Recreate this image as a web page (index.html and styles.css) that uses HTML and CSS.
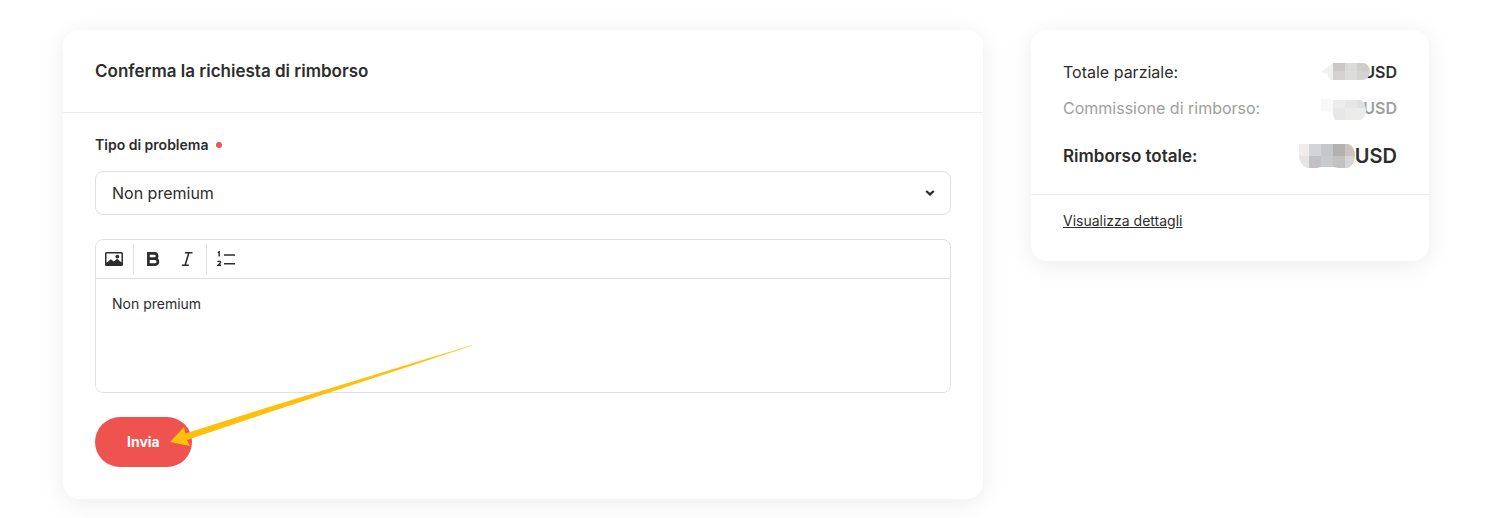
FILE: index.html
```html
<!DOCTYPE html>
<html lang="it">
<head>
    <meta charset="UTF-8">
    <meta name="viewport" content="width=device-width, initial-scale=1">
    <title>Conferma la richiesta di rimborso</title>
    <link rel="stylesheet" href="styles.css">
</head>
<body>
    <main class="page">
        <form class="card">
            <h1 class="card-title">Conferma la richiesta di rimborso</h1>
            <div class="card-body">
                <label class="label" for="problem">Tipo di problema <span class="required"></span></label>
                <div class="select-box">
                    <select id="problem">
                        <option>Non premium</option>
                    </select>
                    <svg class="chevron" width="10" height="8" viewBox="0 0 10 8"><path d="M1.200 2L5 5.400 8.800 2" fill="none" stroke="#2d2d2d" stroke-width="2.200"/></svg>
                </div>

                <div class="editor">
                    <div class="toolbar">
                        <button type="button" class="tool" aria-label="Immagine">
                            <svg width="18" height="14" viewBox="0 0 18 14"><path fill="#2d2d2d" fill-rule="evenodd" d="M1.500 0h15A1.500 1.500 0 0 1 18 1.500v11a1.500 1.500 0 0 1-1.500 1.500h-15A1.500 1.500 0 0 1 0 12.500v-11A1.500 1.500 0 0 1 1.500 0zM1.500 1.500v9.300l4.300-3.600 3 2.400 3.400-2.900 4.300 3.800v-9z"/><circle cx="12.300" cy="4.600" r="1.900" fill="#2d2d2d"/></svg>
                        </button>
                        <span class="divider"></span>
                        <button type="button" class="tool" aria-label="Grassetto">
                            <svg width="14" height="14" viewBox="0 0 14 14"><path d="M2.400 1.300h6a2.700 2.700 0 0 1 0 5.400h-6zm0 5.400h6.500a3 3 0 0 1 0 6H2.400z" fill="none" stroke="#2d2d2d" stroke-width="2.700"/></svg>
                        </button>
                        <button type="button" class="tool" aria-label="Corsivo">
                            <svg width="12" height="14" viewBox="0 0 12 14"><path d="M4 .8h7.500M.8 13.200h7M7.800 1L4.200 13" fill="none" stroke="#2d2d2d" stroke-width="1.600"/></svg>
                        </button>
                        <span class="divider"></span>
                        <button type="button" class="tool" aria-label="Elenco numerato">
                            <svg width="18" height="16" viewBox="0 0 18 16"><path d="M.8 1.600l1.400-.8v4.700M.7 11.200c.2-1.500 2.900-1.500 2.900.1 0 1-1.700 1.900-2.700 3h3.200" fill="none" stroke="#2d2d2d" stroke-width="1.400"/><path d="M7 4h11M7 12.800h11" stroke="#2d2d2d" stroke-width="1.600"/></svg>
                        </button>
                    </div>
                    <textarea class="message" aria-label="Messaggio">Non premium</textarea>
                </div>

                <div class="actions">
                    <button type="submit" class="submit">Invia</button>
                    <svg class="arrow" width="303" height="104" viewBox="0 0 303 104">
                        <defs>
                            <linearGradient id="fade">
                                <stop offset=".85" stop-color="#ffbf0b"/>
                                <stop offset="1" stop-color="#ffbf0b" stop-opacity=".7"/>
                            </linearGradient>
                        </defs>
                        <path fill="url(#fade)" d="M0 97l14-15 1.500 6.500L94 63.500 302 0v.8L94 69 17 95l3 6z"/>
                    </svg>
                </div>
            </div>
        </form>

        <aside class="card">
            <dl class="totals">
                <div class="row">
                    <dt>Totale parziale:</dt>
                    <dd>USD
                        <svg class="mask" width="76" height="18" viewBox="0 0 76 18">
                            <clipPath id="m1"><path d="M0 10L12 1h30c4 0 7 4 7 9s-4 8-8 8H9l-3-6z"/></clipPath>
                            <g clip-path="url(#m1)">
                                <path fill="#f0f0ef" d="M0 0h12v18H0z"/>
                                <path fill="#c9c8c7" d="M12 0h12v9H12z"/><path fill="#dadada" d="M24 0h12v9H24z"/><path fill="#cdcdca" d="M36 0h13v9H36z"/>
                                <path fill="#d3d2d1" d="M12 9h12v9H12z"/><path fill="#dcdcdc" d="M24 9h12v9H24z"/><path fill="#d4d3d1" d="M36 9h13v9H36z"/>
                            </g>
                        </svg>
                    </dd>
                </div>
                <div class="row fee">
                    <dt>Commissione di rimborso:</dt>
                    <dd>USD
                        <svg class="mask" width="76" height="22" viewBox="0 0 76 22">
                            <clipPath id="m2"><path d="M0 0l12 2h26c4 0 7 5 7 10s-3 10-6 10H14l-3-8-11-1z"/></clipPath>
                            <g clip-path="url(#m2)">
                                <path fill="#f8f8f8" d="M0 0h12v22H0z"/>
                                <path fill="#ececec" d="M12 0h12v10H12z"/><path fill="#e7e6e6" d="M24 0h12v10H24z"/><path fill="#dfdfdf" d="M36 0h12v10H36z"/>
                                <path fill="#e7e7e7" d="M12 10h12v12H12z"/><path fill="#ebebea" d="M24 10h24v12H24z"/>
                            </g>
                        </svg>
                    </dd>
                </div>
                <div class="row total">
                    <dt>Rimborso totale:</dt>
                    <dd>USD
                        <svg class="mask" width="98" height="24" viewBox="0 0 98 24">
                            <clipPath id="m3"><path d="M0 0h48c5 0 8 6 8 12s-4 12-8 12h-9l-4-1H22l-4 1h-8C4 24 0 17 0 12z"/></clipPath>
                            <g clip-path="url(#m3)">
                                <path fill="#f0eceb" d="M0 0h10v12H0z"/><path fill="#d3d4d7" d="M10 0h12v12H10z"/><path fill="#c5c7c9" d="M22 0h12v12H22z"/><path fill="#b3b2b1" d="M34 0h12v12H34z"/><path fill="#c8c3be" d="M46 0h10v12H46z"/>
                                <path fill="#e6e5e5" d="M0 12h10v12H0z"/><path fill="#c3c1c3" d="M10 12h12v12H10z"/><path fill="#c9cacc" d="M22 12h12v12H22z"/><path fill="#c2c2c2" d="M34 12h12v12H34z"/><path fill="#d5d5d3" d="M46 12h10v12H46z"/>
                            </g>
                        </svg>
                    </dd>
                </div>
            </dl>
            <div class="details">
                <a href="#">Visualizza dettagli</a>
            </div>
        </aside>
    </main>
</body>
</html>
```
FILE: styles.css
```css
*{
    box-sizing: border-box;
}
body{
    margin: 0;
    background: #fff;
    color: #2d2d2d;
    font-family: Inter, "Liberation Sans", sans-serif;
    font-size: 16px;
    line-height: 24px;
}
button,select,textarea{
    font: inherit;
    color: inherit;
}
.page{
    display: grid;
    grid-template-columns: minmax(0, 1fr) 398px;
    align-items: start;
    gap: 48px;
    padding: 30px 75px 19px 63px;
}
.card{
    background: #fff;
    border-radius: 16px;
    box-shadow: 0 4px 24px rgba(0,0,0,0.08);
}
.card-title{
    margin: 0;
    padding: 29px 32px;
    border-bottom: 1px solid #ececec;
    font-size: 17px;
    font-weight: 600;
}
.card-body{
    padding: 20px 32px 32px;
}
.label{
    display: flex;
    align-items: center;
    gap: 8px;
    margin-bottom: 14px;
    font-size: 14px;
    font-weight: 600;
}
.required{
    width: 6px;
    height: 6px;
    border-radius: 50%;
    background: #ef5350;
}
.select-box{
    position: relative;
    margin-bottom: 24px;
}
.select-box select{
    display: block;
    width: 100%;
    height: 44px;
    padding: 0 16px;
    border: 1px solid #e0e0e0;
    border-radius: 8px;
    background: #fff;
    appearance: none;
}
.chevron{
    position: absolute;
    right: 16px;
    top: 18px;
    pointer-events: none;
}
.editor{
    border: 1px solid #e0e0e0;
    border-radius: 8px;
    overflow: hidden;
}
.toolbar{
    display: flex;
    align-items: center;
    padding: 3px 1px;
    border-bottom: 1px solid #e0e0e0;
}
.tool{
    display: flex;
    align-items: center;
    justify-content: center;
    width: 34px;
    height: 32px;
    padding: 0;
    border: 0;
    background: none;
    cursor: pointer;
}
.divider{
    width: 1px;
    height: 30px;
    margin: 0 2px;
    background: #e0e0e0;
}
.message{
    display: block;
    width: 100%;
    height: 113px;
    padding: 13px 16px;
    border: 0;
    outline: 0;
    resize: none;
    font-size: 14px;
}
.actions{
    position: relative;
    margin-top: 24px;
}
.submit{
    display: block;
    height: 50px;
    padding: 0 32px;
    border: 0;
    border-radius: 25px;
    background: #ef5350;
    color: #fff;
    font-size: 14px;
    font-weight: 700;
    cursor: pointer;
}
.arrow{
    position: absolute;
    left: 75px;
    top: -72px;
    pointer-events: none;
}
.totals{
    margin: 0;
    padding: 30px 32px 26px;
    border-bottom: 1px solid #ececec;
}
.row{
    display: flex;
    align-items: center;
    justify-content: space-between;
    margin-bottom: 12px;
}
.row dd{
    position: relative;
    margin: 0;
    font-weight: 600;
}
.mask{
    position: absolute;
    right: 0;
    top: 2px;
}
.fee{
    color: #9e9e9e;
}
.total{
    margin: 24px 0 0;
    font-size: 17px;
    font-weight: 600;
}
.total dd{
    font-size: 20px;
}
.total .mask{
    top: 0;
}
.details{
    padding: 14px 32px 28px;
    font-size: 14px;
}
.details a{
    color: inherit;
}
```
